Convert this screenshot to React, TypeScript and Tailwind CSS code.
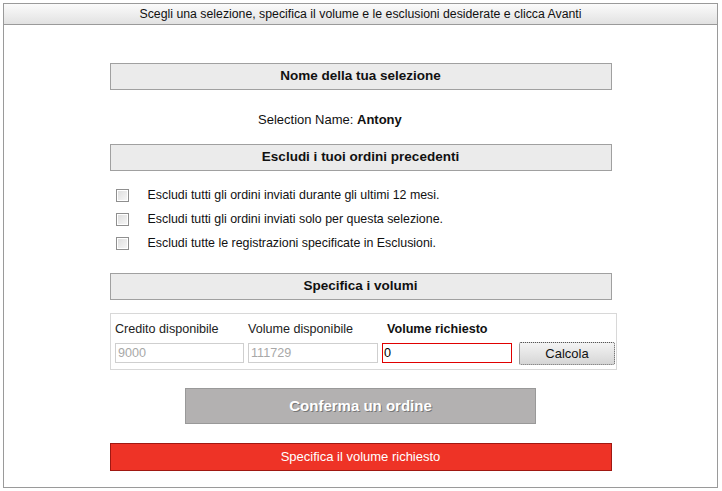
import React from "react";

const font = { fontFamily: '"Liberation Sans", Arial, sans-serif' };

function SectionBar({ title }: { title: string }) {
  return (
    <div className="w-[502px] h-[27px] mx-auto border border-[#a0a0a0] bg-[#ebebeb] flex items-center justify-center text-[13.5px] font-bold text-[#111]">
      {title}
    </div>
  );
}

function Check({ label }: { label: string }) {
  return (
    <div className="flex items-center h-[24px]">
      <span className="w-[13px] h-[13px] ml-[6px] border border-[#8f8f8f] bg-gradient-to-br from-[#dcdcdc] to-[#f8f8f8] shadow-[inset_0_0_0_1px_#fff]" />
      <span className="ml-[19px] text-[12.4px] text-[#111]">{label}</span>
    </div>
  );
}

export default function App() {
  return (
    <div className="w-[722px] h-[491px] bg-white pt-[3px] pl-[3px]" style={font}>
      <div className="w-[715px] h-[485px] border border-[#9a9a9a] flex flex-col">
        <div className="h-[21px] border-b border-[#9a9a9a] bg-gradient-to-b from-[#fbfbfb] to-[#e2e2e2] flex items-center justify-center text-[12.3px] text-[#111]">
          Scegli una selezione, specifica il volume e le esclusioni desiderate e clicca Avanti
        </div>

        <div className="mt-[38px]">
          <SectionBar title="Nome della tua selezione" />
        </div>

        <div className="h-[54px] flex items-center pl-[254px] pt-[6px] text-[13px] text-[#111]">
          <span>Selection Name:&nbsp;</span>
          <span className="font-bold">Antony</span>
        </div>

        <SectionBar title="Escludi i tuoi ordini precedenti" />

        <div className="w-[502px] mx-auto mt-[12px] flex flex-col">
          <Check label="Escludi tutti gli ordini inviati durante gli ultimi 12 mesi." />
          <Check label="Escludi tutti gli ordini inviati solo per questa selezione." />
          <Check label="Escludi tutte le registrazioni specificate in Esclusioni." />
        </div>

        <div className="mt-[18px]">
          <SectionBar title="Specifica i volumi" />
        </div>

        <div className="w-[507px] ml-[106px] mt-[13px] h-[57px] border border-[#d8d8d8] flex items-start pl-[4px] pt-[6px] gap-[4px] text-[12.6px]">
          <div className="flex flex-col w-[129px]">
            <span className="h-[16px] text-[#222]">Credito disponibile</span>
            <div className="mt-[7px] h-[20px] border border-[#cfcfcf] text-[#a8a8a8] pl-[2px] leading-[18px]">9000</div>
          </div>
          <div className="flex flex-col w-[130px]">
            <span className="h-[16px] text-[#222]">Volume disponibile</span>
            <div className="mt-[7px] h-[20px] border border-[#cfcfcf] text-[#a8a8a8] pl-[2px] leading-[18px]">111729</div>
          </div>
          <div className="flex flex-col w-[130px]">
            <span className="h-[16px] pl-[5px] font-bold text-[#111]">Volume richiesto</span>
            <div className="mt-[7px] h-[20px] border border-[#e00000] text-[#000] pl-[1px] leading-[18px]">0</div>
          </div>
          <button className="mt-[22px] ml-[3px] w-[96px] h-[23px] border border-dotted border-[#555] rounded-[2px] bg-gradient-to-b from-[#f4f4f4] to-[#d6d6d6] text-[13px] text-[#111]">
            Calcola
          </button>
        </div>

        <div className="mt-[18px] w-[351px] h-[36px] ml-[181px] border border-[#999] bg-[#b3b1b1] flex items-center justify-center text-[15px] font-bold text-white [text-shadow:1px_1px_0_#777]">
          Conferma un ordine
        </div>

        <div className="mt-[19px] w-[502px] mx-auto h-[28px] border border-[#a01812] bg-[#ee3326] flex items-center justify-center text-[13px] text-white">
          Specifica il volume richiesto
        </div>
      </div>
    </div>
  );
}
